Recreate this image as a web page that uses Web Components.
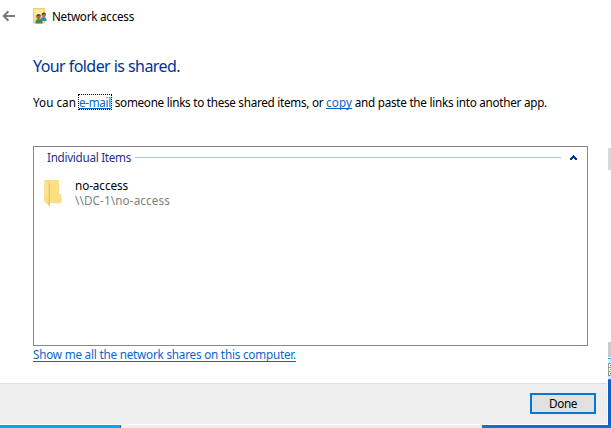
<!DOCTYPE html>
<html lang="en">
<head>
<meta charset="utf-8">
<title>Network access</title>
<style>
html,body{margin:0;height:100%;overflow:hidden;background:#fff}
body{font:11.7px "Noto Sans","Open Sans",sans-serif;color:#000}
</style>
</head>
<body>
<network-dialog></network-dialog>
<script>
const define=(name,html,ready)=>customElements.define(name,class extends HTMLElement{
  connectedCallback(){
    if(this.shadowRoot)return;
    const t=document.createElement('template');t.innerHTML=html;
    this.attachShadow({mode:'open'}).append(t.content.cloneNode(true));
    if(ready)ready(this,this.shadowRoot);
  }
});

/* Text run whose tracking is adjusted so that it fills the width given in "w". */
define('text-run',`<style>
:host{display:block;white-space:pre;line-height:15px;height:16px;flex:none}
span{display:block;width:max-content}
</style><span><slot></slot></span>`,(host,root)=>{
  const w=+host.getAttribute('w');
  host.style.width=w+'px';
  const s=root.querySelector('span');
  s.style.letterSpacing=(w-s.getBoundingClientRect().width)/host.textContent.length+'px';
});

define('link-run',`<style>
:host{display:block;color:#0a66cc;border-bottom:1px solid #0a66cc;height:14px;box-sizing:border-box;cursor:pointer}
:host([focused]){outline:1px dotted #000;outline-offset:0}
</style><slot></slot>`);

define('back-arrow',`<style>:host{display:block;width:14px;height:12px}svg{display:block}</style>
<svg width="14" height="12" viewBox="0 0 14 12" fill="none" stroke="#7b7b7b" stroke-width="2"><path d="M1.7 6H13M6.4 1.3 1.7 6l4.7 4.7"/></svg>`);

define('share-icon',`<style>:host{display:block;width:16px;height:16px}svg{display:block}</style>
<svg width="16" height="16" viewBox="0 0 16 16">
<path d="M.5.5h11.2V15H.5z" fill="#ffe08a" stroke="#e9c35c" stroke-width=".8"/><path d="M1.5 1.5h9v5h-9z" fill="#ffe9a6"/>
<path d="M7.4 13c0-2.6 1-4 3.2-4 2.4 0 3 1.5 3 4z" fill="#2f8fc0"/>
<path d="M2.3 15.6c0-3.3 1.1-4.6 3.6-4.6s3.7 1.3 3.7 4.6z" fill="#3c8a5c"/>
<circle cx="10.7" cy="7.3" r="2" fill="#b8794c"/><path d="M8.6 7c0-3.2 4.5-3.2 4.5 0l-1.5-.8z" fill="#5a4636"/>
<circle cx="5.5" cy="8.9" r="2.2" fill="#a86e4c"/><path d="M3.2 8.6c0-3.6 4.7-3.6 4.7 0l-1.6-1z" fill="#4c463a"/>
</svg>`);

define('folder-icon',`<style>:host{display:block;width:20px;height:28px}svg{display:block}</style>
<svg width="20" height="28" viewBox="0 0 20 28">
<defs><linearGradient id="f" x2="1" y2="1"><stop stop-color="#ffe9a3"/><stop offset="1" stop-color="#f8d775"/></linearGradient></defs>
<path d="M14 23.5h4.5l1 .8-12 2z" fill="#f0f0f0"/>
<path d="M1 1h15v13.5l2.3 1.5v7.7H6z" fill="#f5d575"/>
<path d="M6 1h10v13.5l2.3 1.5v7.3L7 23.6z" fill="#fbdf85"/>
<path d="M1 1l5.7 3.2v23L1 22.5z" fill="url(#f)"/><path d="M6.3 4.3v22.5" stroke="#e5bd55" stroke-width="1"/>
</svg>`);

define('shared-list',`<style>
:host{display:block;box-sizing:border-box;width:555px;height:200px;border:1px solid #828790;flex:none}
.head{display:flex;height:21px;padding-left:13px;align-items:center;color:#1e3287}
.rule{height:1px;background:#b0bfdf;width:426px;margin-left:4px}
svg{display:block;margin-left:9px}
.item{display:flex;padding:11px 0 0 9px;gap:12px}
.names{display:block;margin-top:-1px}
.names text-run{height:15px}
.path{color:#808080}
</style>
<div class="head"><text-run w="84">Individual Items</text-run><span class="rule"></span>
<svg width="7" height="5" viewBox="0 0 7 5" shape-rendering="crispEdges" fill="#003399"><path d="M3 0h1v1h1v1h1v1h1v2H5V4H4V3H3v1H2v1H0V3h1V2h1V1h1z"/></svg></div>
<div class="item"><folder-icon></folder-icon><div class="names"><text-run w="53">no-access</text-run><text-run class="path" w="95">\\\\DC-1\\no-access</text-run></div></div>`);

define('push-button',`<style>
:host{display:flex;box-sizing:border-box;width:66px;height:21px;border:2px solid #0078d7;background:#e1e1e1;align-items:center;justify-content:center}
</style><slot></slot>`);

/* Slivers of the windows that show beside and below the dialog. */
define('desktop-edge',`<style>
:host{display:block}
.side{position:absolute;left:608px;top:0;width:3px;height:428px;display:grid;grid-template-rows:148px 22px 172px 15px 1px 1px 3px 17px 1px 48px}
.bottom{position:absolute;left:0;top:425px;width:611px;height:3px;display:grid;grid-template-columns:120px 1px 361px 129px}
svg{display:block}
</style>
<div class="side"><i></i><i style="background:#d9d9d9"></i><i></i><i style="background:#cbcbcb"></i><i></i><i style="background:#2b9fd8"></i><i style="background:#ccecf8"></i>
<svg width="3" height="17" shape-rendering="crispEdges"><path fill="#ccecf8" d="M0 0h3v17H0z"/><path fill="#999" d="M0 1h3v13H0z"/><path fill="#fff" d="M1 2h2v3H1zM1 6h2v3H1zM1 10h2v3H1z"/><path fill="#4a8060" d="M2 3h1v1H2z"/><path fill="#4a8cff" d="M2 7h1v1H2z"/><path fill="#e01030" d="M2 11h1v1H2z"/></svg>
<i style="background:#1b8fd0"></i><i style="background:#0863cb"></i></div>
<div class="bottom"><i style="background:#00a7ef"></i><i style="background:#176c98"></i><i style="background:#efefef"></i><i style="background:#0873d3"></i></div>`);

define('network-dialog',`<style>
:host{display:flex;flex-direction:column;width:611px;height:428px;position:relative;overflow:hidden}
header{display:flex;align-items:center;height:32px;padding-left:2px;flex:none}
header text-run{margin-top:2px}
share-icon{margin:0 3px 0 17px}
main{display:flex;flex-direction:column;height:351px;padding-left:33px;box-sizing:border-box;flex:none}
.title{font-size:16px;color:#003399;line-height:24px;height:24px;margin-top:22px}
.line{display:flex;height:16px;margin:17px 0 35px;align-items:flex-start}
.all{margin-top:1px;width:263px;height:15px}
footer{display:flex;box-sizing:border-box;width:607px;height:41px;border-top:1px solid #dfdfdf;background:#efefef;align-items:flex-start;justify-content:flex-end;padding:9px 11px 0 0;flex:none}
</style>
<header><back-arrow></back-arrow><share-icon></share-icon><text-run w="82">Network access</text-run></header>
<main>
<text-run class="title" w="147">Your folder is shared.</text-run>
<div class="line"><text-run w="46">You can </text-run><link-run focused><text-run w="32">e-mail</text-run></link-run><text-run w="214" style="margin-left:1px"> someone links to these shared items, or </text-run><link-run><text-run w="26">copy</text-run></link-run><text-run w="195"> and paste the links into another app.</text-run></div>
<shared-list></shared-list>
<link-run class="all"><text-run w="263">Show me all the network shares on this computer.</text-run></link-run>
</main>
<footer><push-button><text-run w="28">Done</text-run></push-button></footer>
<desktop-edge></desktop-edge>`);
</script>
</body>
</html>
